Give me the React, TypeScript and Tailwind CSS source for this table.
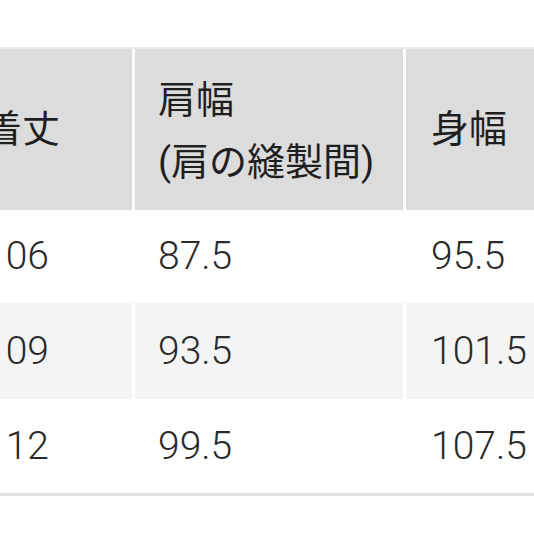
const ROWS = [
  ['106', '87.5', '95.5'],
  ['109', '93.5', '101.5'],
  ['112', '99.5', '107.5'],
]

const ROW_BG = ['bg-white', 'bg-[#f4f4f4]', 'bg-white']
const ROW_H = ['h-[93px]', 'h-[96px]', 'h-[94px]']

const jp = { fontFamily: 'Roboto, "Noto Sans CJK JP", sans-serif' }

export default function App() {
  return (
    <div className="w-[534px] h-[534px] overflow-hidden bg-white">
      <div className="pt-[47px] ml-[-40px] w-[640px]">
        <div className="border-t-2 border-[#ebebeb] border-b-[3px] border-b-[#e0e0e0]">
          {/* header */}
          <div className="flex gap-[3px] h-[161px] text-[38px] text-[#1f1f1f]" style={jp}>
            <div className="w-[172px] shrink-0 bg-[#dcdcdc] flex items-center pl-[24px]">着丈</div>
            <div className="w-[268px] shrink-0 bg-[#dcdcdc] flex items-center pl-[23px]">
              <div className="leading-[62px] pt-[3px]">
                <div>肩幅</div>
                <div>(肩の縫製間)</div>
              </div>
            </div>
            <div className="flex-1 bg-[#dcdcdc] flex items-center pl-[25px]">身幅</div>
          </div>
          {/* body */}
          {ROWS.map((row, i) => (
            <div
              key={i}
              className={`flex gap-[3px] ${ROW_H[i]} text-[39px] font-light text-[#2a2a2a]`}
              style={{ fontFamily: 'Roboto, sans-serif' }}
            >
              <div className={`w-[172px] shrink-0 ${ROW_BG[i]} flex items-center pl-[24px]`}>{row[0]}</div>
              <div className={`w-[268px] shrink-0 ${ROW_BG[i]} flex items-center pl-[23px]`}>{row[1]}</div>
              <div className={`flex-1 ${ROW_BG[i]} flex items-center pl-[25px]`}>{row[2]}</div>
            </div>
          ))}
        </div>
      </div>
    </div>
  )
}
